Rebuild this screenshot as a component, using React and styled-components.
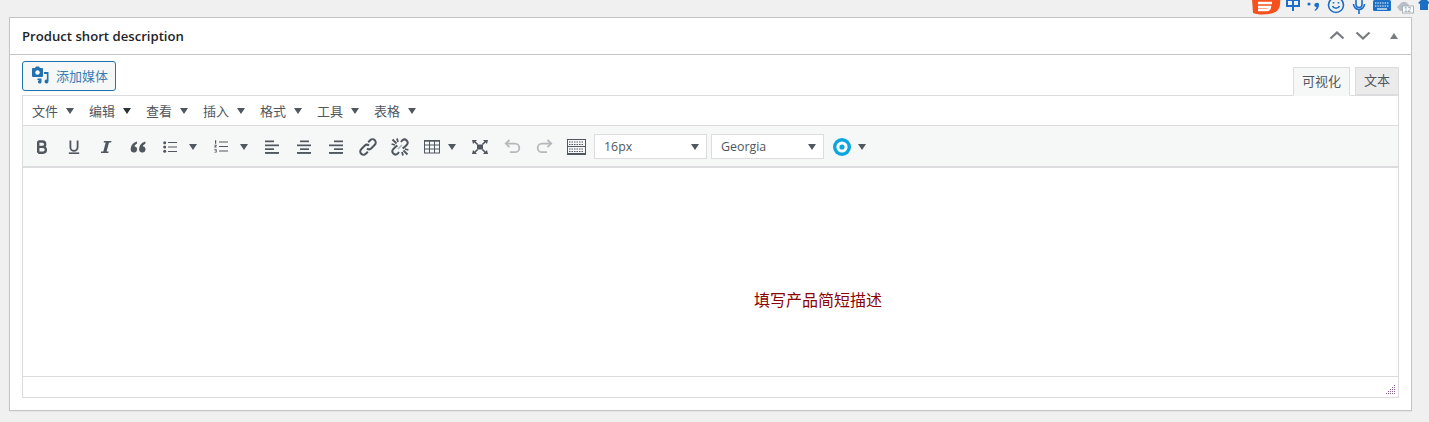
import React from "react";
import styled, { createGlobalStyle } from "styled-components";

const Global = createGlobalStyle`
  html, body {
    margin: 0;
    background: #f0f0f1;
  }
  body {
    font-family: "Open Sans", "Noto Sans CJK SC", sans-serif;
    color: #50575e;
    overflow: hidden;
  }
`;

const Page = styled.div`
  position: relative;
  height: 422px;
  padding: 17px 17px 0 9px;
  box-sizing: border-box;
`;

const Tray = styled.div`
  position: absolute;
  top: -5px;
  left: 1252px;
  width: 200px;
  display: flex;
  align-items: center;
  height: 20px;
  color: #1c6fc4;
  svg {
    flex: none;
  }
`;

const Panel = styled.section`
  height: 394px;
  box-sizing: border-box;
  background: #fff;
  border: 1px solid #c3c4c7;
  box-shadow: 0 1px 1px rgba(0, 0, 0, 0.04);
`;

const PanelHead = styled.header`
  height: 36px;
  display: flex;
  align-items: center;
  justify-content: space-between;
  padding: 0 12px;
  border-bottom: 1px solid #c3c4c7;
`;

const PanelTitle = styled.h2`
  margin: 0;
  font-size: 13.15px;
  font-weight: 600;
  color: #1d2327;
`;

const HeadActions = styled.div`
  display: flex;
  align-items: center;
  gap: 4px;
`;

const SortTriangle = styled.span`
  width: 0;
  height: 0;
  margin-left: 12px;
  margin-right: 1px;
  border-left: 4px solid transparent;
  border-right: 4px solid transparent;
  border-bottom: 6px solid #787c82;
`;

const PanelBody = styled.div`
  padding: 6px 12px 0;
`;

const EditorTop = styled.div`
  height: 34px;
  display: flex;
  justify-content: space-between;
  align-items: flex-start;
`;

const MediaButton = styled.button`
  width: 94px;
  height: 30px;
  display: flex;
  align-items: center;
  gap: 7px;
  padding: 0 0 2px 8px;
  box-sizing: border-box;
  background: #f6f7f7;
  border: 1px solid #2271b1;
  border-radius: 3px;
  color: #3a7db5;
  font: 13px "Open Sans", "Noto Sans CJK SC", sans-serif;
`;

const Tabs = styled.div`
  display: flex;
  gap: 5px;
  padding-top: 6px;
  margin-bottom: -1px;
`;

const Tab = styled.div`
  height: ${(p) => (p.$active ? "29px" : "28px")};
  padding: 0 8px 3px;
  box-sizing: border-box;
  display: flex;
  align-items: center;
  font-size: 13px;
  color: #50575e;
  background: ${(p) => (p.$active ? "#f6f7f7" : "#ebebeb")};
  border: 1px solid #dcdcde;
  border-bottom-color: ${(p) => (p.$active ? "#f6f7f7" : "#dcdcde")};
  position: relative;
`;

const Editor = styled.div`
  border: 1px solid #dcdcde;
  height: 303px;
  box-sizing: border-box;
  display: flex;
  flex-direction: column;
`;

const MenuBar = styled.div`
  height: 30px;
  box-sizing: border-box;
  display: flex;
  align-items: center;
  padding-left: 9px;
  gap: 15px;
  background: #fff;
  border-bottom: 1px solid #dcdcde;
`;

const MenuItem = styled.div`
  display: flex;
  align-items: center;
  gap: 8px;
  font-size: 13px;
  color: #50575e;
`;

const Caret = styled.span`
  width: 0;
  height: 0;
  border-left: 4px solid transparent;
  border-right: 4px solid transparent;
  border-top: 6px solid ${(p) => p.$color || "#50575e"};
`;

const ToolBar = styled.div`
  height: 42px;
  box-sizing: border-box;
  display: flex;
  align-items: center;
  padding: 1px 0 0 3px;
  background: #f6f7f7;
  border-bottom: 2px solid #dcdcde;
`;

const ToolIcon = styled.span`
  width: ${(p) => p.$w || 32}px;
  margin-right: ${(p) => p.$after || 0}px;
  height: 20px;
  display: flex;
  align-items: center;
  justify-content: center;
  flex: none;
`;

const SelectBox = styled.div`
  width: 113px;
  height: 25px;
  box-sizing: border-box;
  margin-left: ${(p) => p.$before || 0}px;
  margin-right: 4px;
  display: flex;
  align-items: center;
  justify-content: space-between;
  padding: 0 7px 0 9px;
  background: #fff;
  border: 1px solid #dcdcde;
  font-size: 12.4px;
  color: #50575e;
  flex: none;
`;

const Content = styled.div`
  flex: 1;
  position: relative;
  background: #fff;
`;

const Placeholder = styled.div`
  position: absolute;
  left: 731px;
  top: 121px;
  font-size: 16px;
  line-height: 22px;
  color: #8b0000;
`;

const StatusBar = styled.div`
  height: 21px;
  box-sizing: border-box;
  position: relative;
  border-top: 1px solid #dcdcde;
  background: #fff;
`;

const Grip = styled.svg`
  position: absolute;
  right: 2px;
  bottom: 2px;
`;

const ink = "#50575e";

const Chevron = ({ up }) => (
  <svg width="22" height="20" viewBox="0 0 22 20" fill="none" stroke="#787c82" strokeWidth="2.3">
    <path d={up ? "M4.5 12.5l6.5-6 6.5 6" : "M4.5 6.5l6.5 6 6.5-6"} />
  </svg>
);
const Bold = () => (
  <svg width="12" height="14" viewBox="0 0 12 14" fill="none" stroke={ink} strokeWidth="2.4">
    <path d="M2.2 1.2v11.6M2.2 1.5h4.3a2.6 2.6 0 0 1 0 5.4H2.2m0 0h4.8a2.9 2.9 0 0 1 0 5.8H2.2" />
  </svg>
);
const Underline = () => (
  <svg width="12" height="14" viewBox="0 0 12 14" fill="none" stroke={ink}>
    <path strokeWidth="1.8" d="M2.4 0.5v6.8a3.6 3.6 0 0 0 7.2 0V0.5" />
    <path strokeWidth="1.6" d="M0.8 13.2h10.4" />
  </svg>
);
const Italic = () => (
  <svg width="12" height="14" viewBox="0 0 12 14" fill={ink}>
    <path d="M4 1h7.5l-.4 1.6H9L6.6 11.4h2.1l-.4 1.6H.8l.4-1.6h2.1L5.7 2.6H3.6z" />
  </svg>
);
const Quote = () => (
  <svg width="16" height="12" viewBox="0 0 16 12" fill={ink}>
    <path d="M6.8.6C3.6 1.6 1 4 .8 7.6a3.2 3.2 0 1 0 3.7-2.4c.4-1 1.3-1.9 2.7-2.6z" />
    <path d="M15.2.6c-3.2 1-5.8 3.4-6 7a3.2 3.2 0 1 0 3.7-2.4c.4-1 1.3-1.9 2.7-2.6z" />
  </svg>
);
const Bullets = () => (
  <svg width="14" height="12" viewBox="0 0 14 12" fill={ink}>
    <circle cx="1.7" cy="1.7" r="1.5" />
    <circle cx="1.7" cy="6" r="1.5" />
    <circle cx="1.7" cy="10.3" r="1.5" />
    <path d="M5 1h9v1H5zM5 5.5h9v1H5zM5 10h9v1H5z" />
  </svg>
);
const Numbers = () => (
  <svg width="14" height="13" viewBox="0 0 14 13" fill={ink}>
    <path d="M1 .3h1.2v3.4H1zM.3 4.8h2.4v.9l-1.2 1h1.2v.8H.3v-.8l1.4-1.2H.3zM.3 9.3h2.4v3.3H.3v-.7h1.6v-.6H.8v-.7h1.1v-.6H.3z" />
    <path d="M5 1.5h9v1H5zM5 6h9v1H5zM5 10.5h9v1H5z" />
  </svg>
);
const Align = ({ kind }) => {
  const x = kind === "left" ? 0 : kind === "center" ? 3 : 5;
  return (
    <svg width="14" height="14" viewBox="0 0 14 14" fill={ink}>
      <rect x={x} y="0.5" width="9" height="1.7" />
      <rect x="0" y="4.5" width="14" height="1.7" />
      <rect x={x} y="8.3" width="9" height="1.7" />
      <rect x="0" y="12" width="14" height="1.9" />
    </svg>
  );
};
const LinkIcon = () => (
  <svg width="18" height="18" viewBox="0 0 18 18" fill="none" stroke={ink} strokeWidth="2">
    <path d="M9.2 4.2L11.2 2.2a3.2 3.2 0 0 1 4.6 4.6l-3.4 3.4a3.2 3.2 0 0 1-4.4.2" />
    <path d="M8.8 13.8l-2 2a3.2 3.2 0 0 1-4.6-4.6l3.4-3.4a3.2 3.2 0 0 1 4.4-.2" />
  </svg>
);
const UnlinkIcon = () => (
  <svg width="18" height="18" viewBox="0 0 18 18" fill="none" stroke={ink} strokeWidth="2">
    <path d="M10 4l1.4-1.8a3.2 3.2 0 0 1 4.4 4.6l-2.6 2.6-1.6 1" />
    <path d="M8 14l-1.4 1.8a3.2 3.2 0 0 1-4.4-4.6l2.6-2.6 1.6-1" />
    <path strokeWidth="1.8" d="M1.5 1.5l4 4M6 .6l1 3.4M.6 6l3.4 1M16.5 16.5l-4-4M12 17.4l-1-3.4M17.4 12l-3.4-1" />
    <path strokeWidth="1.4" stroke="#a9b4bd" d="M7 11l4-4" />
  </svg>
);
const TableIcon = () => (
  <svg width="16" height="14" viewBox="0 0 16 14" fill="none" stroke={ink}>
    <rect x="0.5" y="0.5" width="15" height="12.5" />
    <path d="M0.5 0.9h15" strokeWidth="1.6" />
    <path d="M5.5 1v12M10.5 1v12M1 5h14M1 9h14" />
  </svg>
);
const Fullscreen = () => (
  <svg width="16" height="14" viewBox="0 0 16 14" fill={ink}>
    <rect x="5" y="4.5" width="6" height="5" />
    <path d="M0 0h5L3.6 1.4 6.2 4 5 5 2.4 2.4 1 4zM16 0h-5l1.4 1.4L9.8 4l1.2 1 2.6-2.6L15 4zM0 14h5l-1.4-1.4L6.2 10 5 9l-2.6 2.6L1 10zM16 14h-5l1.4-1.4L9.8 10l1.2-1 2.6 2.6L15 10z" />
  </svg>
);
const Undo = ({ flip }) => (
  <svg width="17" height="15" viewBox="0 0 17 15" fill="none" stroke="#b5b8bb" strokeWidth="1.8" style={flip ? { transform: "scaleX(-1)" } : undefined}>
    <path d="M5.5 1L1.8 4.6l3.7 3.6" />
    <path d="M2 4.6h9a4.2 4.2 0 0 1 0 8.6H6" />
  </svg>
);
const Keyboard = () => (
  <svg width="19" height="16" viewBox="0 0 19 16" fill="none" stroke={ink}>
    <path d="M0 .5h19M0 7.5h19" />
    <path d="M0 15h19" strokeWidth="2" />
    <path d="M.5 0v16M18.5 0v16" strokeWidth="1" />
    <path d="M2 3h15M2 5.5h15M2 10h15M2 12.5h15" strokeDasharray="1.5 1" />
  </svg>
);
const Ring = () => (
  <svg width="18" height="18" viewBox="0 0 18 18">
    <circle cx="9" cy="9" r="9" fill="#0ba5e0" />
    <circle cx="9" cy="9" r="5.6" fill="#fff" />
    <circle cx="9" cy="9" r="2.6" fill="#0ba5e0" />
  </svg>
);
const MediaIcon = () => (
  <svg width="18" height="18" viewBox="0 0 18 18" fill="#2271b1">
    <path d="M2 2h2l1-1.6h3L9 2h2a1 1 0 0 1 1 1v7a1 1 0 0 1-1 1H2a1 1 0 0 1-1-1V3a1 1 0 0 1 1-1z" />
    <circle cx="6.5" cy="6.5" r="2.2" fill="#fff" />
    <path d="M13 6h4.5v9.5a2 2 0 1 1-1.6-2V8H13z" />
    <path d="M6.5 12.5h4v3.2a1.8 1.8 0 1 1-1.4-1.7v-.1H6.5z" />
  </svg>
);

const TrayIcons = () => (
  <>
    <svg width="30" height="20" viewBox="0 0 30 20">
      <path fill="#f4511e" d="M0 4l28-1c1 8-1 13-7 15-6 2-14 2-20 0z" />
      <path d="M6 8h14M6 12h12a3 3 0 0 1-3 3H6" stroke="#fff" strokeWidth="2.4" fill="none" />
    </svg>
    <svg width="22" height="20" viewBox="0 0 22 20" fill="none" stroke="currentColor" strokeWidth="2" style={{ marginLeft: 2 }}>
      <path d="M3 5h12v6H3zM9 0v16" />
    </svg>
    <svg width="16" height="20" viewBox="0 0 16 20" fill="currentColor">
      <circle cx="3" cy="9" r="1.6" />
      <path d="M10 8a2 2 0 0 1 3 2c0 3-2 5-4 6l-.5-1c1-.5 1.8-1.6 2-3a2 2 0 0 1-.5-4z" />
    </svg>
    <svg width="18" height="20" viewBox="0 0 18 20" fill="none" stroke="currentColor" strokeWidth="1.6" style={{ marginLeft: 5 }}>
      <circle cx="9" cy="10" r="7.5" />
      <path d="M5.5 11a3.8 3.8 0 0 0 7 0" />
      <path d="M6.5 7v1.5M11.5 7v1.5" />
    </svg>
    <svg width="14" height="20" viewBox="0 0 14 20" fill="none" stroke="currentColor" strokeWidth="1.6" style={{ marginLeft: 7 }}>
      <rect x="4" y="2.5" width="6" height="10" rx="3" />
      <path d="M1.5 9a5.5 5.5 0 0 0 11 0M7 14.5V19" />
    </svg>
    <svg width="18" height="20" viewBox="0 0 18 20" style={{ marginLeft: 7 }}>
      <rect x="0" y="5" width="18" height="11" rx="1.5" fill="currentColor" />
      <path d="M2 8h14M2 11h14" stroke="#fff" strokeWidth="1.2" strokeDasharray="1.4 1" />
      <path d="M4 14h10" stroke="#fff" strokeWidth="1.2" />
    </svg>
    <svg width="18" height="20" viewBox="0 0 18 20" style={{ marginLeft: 5 }}>
      <path fill="#b8c0c7" d="M1 12l5-5h4l3 3v6H4z" />
      <rect x="6.5" y="11" width="11" height="7" fill="#fff" stroke="#a9b0b6" />
      <text x="8" y="17" fontSize="6.5" fontFamily="Liberation Sans" fill="#8a9299">12</text>
    </svg>
    <svg width="12" height="20" viewBox="0 0 12 20" fill="#1c6fc4" style={{ marginLeft: 4 }}>
      <path d="M3 5h6l3 3-2 1v6H2V9L0 8z" />
    </svg>
  </>
);

const menus = ["文件", "编辑", "查看", "插入", "格式", "工具", "表格"];

export default function App() {
  return (
    <>
      <Global />
      <Page>
        <Tray>
          <TrayIcons />
        </Tray>
        <Panel>
          <PanelHead>
            <PanelTitle>Product short description</PanelTitle>
            <HeadActions>
              <Chevron up />
              <Chevron />
              <SortTriangle />
            </HeadActions>
          </PanelHead>
          <PanelBody>
            <EditorTop>
              <MediaButton>
                <MediaIcon />
                添加媒体
              </MediaButton>
              <Tabs>
                <Tab $active>可视化</Tab>
                <Tab>文本</Tab>
              </Tabs>
            </EditorTop>
            <Editor>
              <MenuBar>
                {menus.map((m) => (
                  <MenuItem key={m}>
                    {m}
                    <Caret $color={m === "编辑" ? "#2c3338" : undefined} />
                  </MenuItem>
                ))}
              </MenuBar>
              <ToolBar>
                <ToolIcon><Bold /></ToolIcon>
                <ToolIcon><Underline /></ToolIcon>
                <ToolIcon><Italic /></ToolIcon>
                <ToolIcon><Quote /></ToolIcon>
                <ToolIcon><Bullets /></ToolIcon>
                <ToolIcon $w={14} $after={5}><Caret /></ToolIcon>
                <ToolIcon><Numbers /></ToolIcon>
                <ToolIcon $w={14} $after={5}><Caret /></ToolIcon>
                <ToolIcon><Align kind="left" /></ToolIcon>
                <ToolIcon><Align kind="center" /></ToolIcon>
                <ToolIcon><Align kind="right" /></ToolIcon>
                <ToolIcon><LinkIcon /></ToolIcon>
                <ToolIcon><UnlinkIcon /></ToolIcon>
                <ToolIcon><TableIcon /></ToolIcon>
                <ToolIcon $w={8} $after={8}><Caret /></ToolIcon>
                <ToolIcon><Fullscreen /></ToolIcon>
                <ToolIcon><Undo /></ToolIcon>
                <ToolIcon><Undo flip /></ToolIcon>
                <ToolIcon><Keyboard /></ToolIcon>
                <SelectBox $before={2}>16px<Caret /></SelectBox>
                <SelectBox>Georgia<Caret /></SelectBox>
                <ToolIcon $w={28}><Ring /></ToolIcon>
                <ToolIcon $w={12}><Caret /></ToolIcon>
              </ToolBar>
              <Content>
                <Placeholder>填写产品简短描述</Placeholder>
              </Content>
              <StatusBar>
                <Grip width="10" height="10" viewBox="0 0 10 10" fill="#85608f">
                  <path d="M8 0h1v1H8zM8 2h1v1H8zM6 2h1v1H6zM8 4h1v1H8zM6 4h1v1H6zM4 4h1v1H4zM8 6h1v1H8zM6 6h1v1H6zM4 6h1v1H4zM2 6h1v1H2zM8 8h1v1H8zM6 8h1v1H6zM4 8h1v1H4zM2 8h1v1H2zM0 8h1v1H0z" />
                </Grip>
              </StatusBar>
            </Editor>
          </PanelBody>
        </Panel>
      </Page>
    </>
  );
}
